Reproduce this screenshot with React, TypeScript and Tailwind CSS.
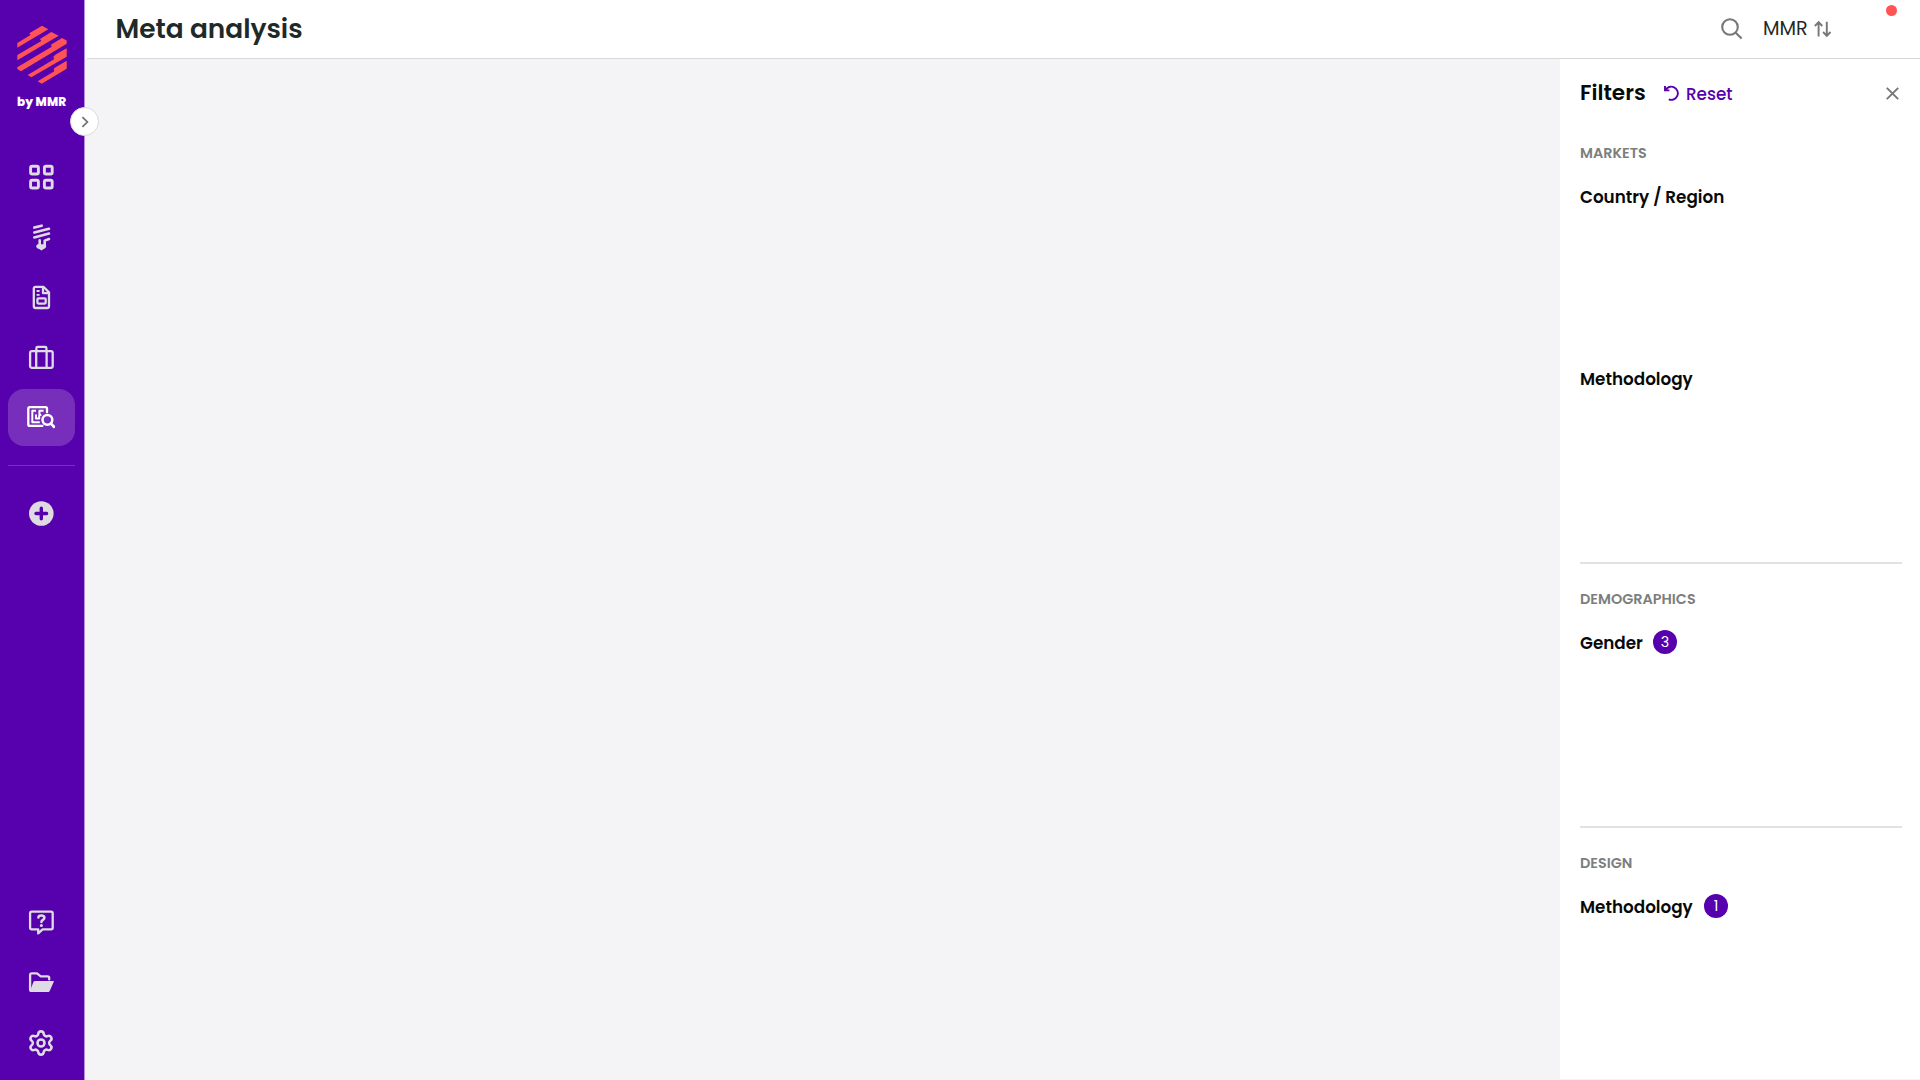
import React from 'react';
import { Settings } from 'lucide-react';

interface NavItem {
  name: string;
  icon: React.ReactNode;
  isActive?: boolean;
}

const Icon: React.FC<{ children: React.ReactNode }> = ({ children }) => (
  <svg
    width="28"
    height="28"
    viewBox="0 0 28 28"
    fill="none"
    stroke="currentColor"
    strokeWidth="2.3"
    strokeLinecap="round"
    strokeLinejoin="round"
  >
    {children}
  </svg>
);

const Logo = () => (
  <svg width="50" height="60" viewBox="17 25 50 60" fill="#ff5456">
    <path d="M17.3 43 30.5 35 29.3 33.3 42 25.7 48.3 29.3 17.3 47.7Z" />
    <path d="M17.3 55 41.3 41 40 39 51.3 32 58.7 35.7 17.3 60.3Z" />
    <path d="M17.3 67.3 51.7 46.7 51 44.8 62 38 66.7 40.5V43.7L21 71.2 17.3 69Z" />
    <path d="M27.7 75 54 59.3 53.5 56.5 56 54.3 66.7 48.3V56.7L31.3 77.3Z" />
    <path d="M37.7 81.3 54.3 71.3 53.7 68.7 56 66.9 66.7 60.8V68.7L41.7 83.7Z" />
  </svg>
);

const mainItems: NavItem[] = [
  {
    name: 'dashboard',
    icon: (
      <Icon>
        <g strokeWidth="2.9">
          <rect x="3.6" y="3.2" width="7.8" height="7.8" rx="1.6" />
          <rect x="17.4" y="3.2" width="7.8" height="7.8" rx="1.6" />
          <rect x="3.6" y="17.2" width="7.8" height="7.8" rx="1.6" />
          <rect x="17.4" y="17.2" width="7.8" height="7.8" rx="1.6" />
        </g>
      </Icon>
    ),
  },
  {
    name: 'ideas',
    icon: (
      <Icon>
        <path
          strokeWidth="2.6"
          d="M7.3 4.6 14.7 2.7M7.3 9.4 22 5.7M7.3 14.4 22 10.6M17.7 22V17.6L22 16M12.7 17.2V22"
        />
        <path
          fill="currentColor"
          stroke="none"
          d="M10.4 21.2H18L19.1 22.6C19.4 24.1 18.5 25.8 16.7 26L14.5 27.6 12.1 26C9.9 25.8 8.9 24.2 9.3 22.6Z"
        />
      </Icon>
    ),
  },
  {
    name: 'reports',
    icon: (
      <Icon>
        <path d="M8.6 3.8H16.4L22 9.4V23.2A1.8 1.8 0 0 1 20.2 25H8.6A1.8 1.8 0 0 1 6.8 23.2V5.6A1.8 1.8 0 0 1 8.6 3.8Z" />
        <path d="M16 4.8V10.2H21.4" />
        <rect x="10.4" y="15.4" width="8.3" height="5.2" rx="1" />
        <path strokeWidth="1.8" strokeLinecap="butt" d="M9.6 8H12.6M9.6 11.8H12.6" />
      </Icon>
    ),
  },
  {
    name: 'projects',
    icon: (
      <Icon>
        <rect x="3.1" y="8.2" width="22.6" height="16.6" rx="1.8" />
        <path d="M9.2 8.2V24.8M19.6 8.2V24.8M9.4 7.6V5A1.2 1.2 0 0 1 10.6 3.8H18.2A1.2 1.2 0 0 1 19.4 5V7.6" />
      </Icon>
    ),
  },
  {
    name: 'meta',
    isActive: true,
    icon: (
      <Icon>
        <path d="M20 9.2V5.6A1.4 1.4 0 0 0 18.6 4.2H2.7A1.4 1.4 0 0 0 1.3 5.6V21.4A1.4 1.4 0 0 0 2.7 22.8H15.4" />
        <path
          strokeWidth="2"
          strokeLinecap="butt"
          d="M9 7.8H5.3V19.2H12.8M16.6 7.8H12.4V11.8M9 11.6V15.6H12.2V12.8L14.2 11.4"
        />
        <circle cx="20.4" cy="16.8" r="4.9" strokeWidth="2.5" />
        <path strokeWidth="2.8" d="M24 20.6 27 23.8" />
      </Icon>
    ),
  },
];

const bottomItems: NavItem[] = [
  {
    name: 'help',
    icon: (
      <Icon>
        <path d="M4.7 3.6H24.1A1.6 1.6 0 0 1 25.7 5.2V19.8A1.6 1.6 0 0 1 24.1 21.4H15.6L11.2 25.4V21.4H4.7A1.6 1.6 0 0 1 3.1 19.8V5.2A1.6 1.6 0 0 1 4.7 3.6Z" />
        <path strokeWidth="2.5" d="M11.4 9.4C11.4 6.8 17.4 6.6 17.4 9.8 17.4 12 14.4 11.8 14.4 14" />
        <circle cx="14.4" cy="17.6" r="1.5" fill="currentColor" stroke="none" />
      </Icon>
    ),
  },
  {
    name: 'files',
    icon: (
      <Icon>
        <path d="M3.6 22.8C3.3 22.6 3.1 22.2 3.1 21.8V7A1.6 1.6 0 0 1 4.7 5.4H10L13.8 8.4H20.6A1.6 1.6 0 0 1 22.2 10V11.4" />
        <path
          fill="currentColor"
          stroke="none"
          d="M8 13H26C26.7 13 27 13.5 26.7 14.1L22.8 22.8C22.4 23.6 21.9 24 21 24H3.6C2.9 24 2.8 23.4 3.1 22.8L6.4 14C6.7 13.3 7.2 13 8 13Z"
        />
      </Icon>
    ),
  },
  { name: 'settings', icon: <Settings size={28} strokeWidth={2.2} className="mt-px" /> },
];

const NavButton: React.FC<{ item: NavItem }> = ({ item }) => (
  <button
    className={`flex h-[57px] w-[67px] items-center justify-center rounded-2xl pb-px pr-px ${
      item.isActive ? 'bg-[#772fbb] text-white' : 'text-[#dedbe2]'
    }`}
  >
    {item.icon}
  </button>
);

const Sidebar = () => (
  <aside className="relative flex w-[85px] shrink-0 flex-col border-r border-[#b68fdc] bg-[#5700ad] pl-2">
    <div className="ml-[9px] mt-[25px] h-[60px]">
      <Logo />
    </div>
    <span className="ml-[9px] mt-2 whitespace-nowrap text-[12px] font-extrabold leading-[18px] tracking-[0.1px] text-white">
      by MMR
    </span>
    <nav className="mt-[38px] flex flex-col gap-[3px]">
      {mainItems.map((item) => (
        <NavButton key={item.name} item={item} />
      ))}
    </nav>
    <div className="mt-[19px] h-px w-[67px] bg-[#772fbb]" />
    <button className="mt-[19px] flex h-[57px] w-[67px] items-center justify-center pb-px pr-px text-[#dedbe2]">
      <Icon>
        <circle cx="14.3" cy="14.5" r="12.3" fill="currentColor" stroke="none" />
        <path stroke="#5700ad" strokeWidth="3.4" d="M14.3 9.2V19.8M9 14.5H19.6" />
      </Icon>
    </button>
    <div className="mb-[9px] mt-auto flex flex-col gap-[3px]">
      {bottomItems.map((item) => (
        <NavButton key={item.name} item={item} />
      ))}
    </div>
    <button className="absolute left-[70px] top-[107px] flex size-[29px] items-center justify-center rounded-full border border-[#d9d9dc] bg-white">
      <svg width="12" height="12" viewBox="0 0 12 12" fill="none" stroke="#6c706f" strokeWidth="1.7">
        <path d="M3.4 1.2 8.4 6 3.4 10.8" />
      </svg>
    </button>
  </aside>
);

const Header = () => (
  <header className="h-[59px] bg-white pl-0.5">
    <div className="flex h-full items-center border-b border-[#d6d7d9] pl-[28.5px]">
      <h1 className="text-[26.4px] font-semibold leading-9 text-[#1f2a28]">Meta analysis</h1>
      <div className="relative ml-auto flex h-full w-[199px] items-center">
        <svg className="mb-px" width="22" height="22" viewBox="0 0 22 22" fill="none" stroke="#747877" strokeWidth="2.1">
          <circle cx="9" cy="9" r="7.8" />
          <path d="M14.7 14.7 20.6 20.6" />
        </svg>
        <span className="ml-[20px] w-[51px] text-[19.2px] leading-7 text-[#1f2a28]">MMR</span>
        <svg className="mb-px" width="18" height="18" viewBox="0 0 18 18" fill="none" stroke="#747877" strokeWidth="1.9">
          <path d="M4.6 16.4V2.4M.9 6 4.6 2.2 8.3 6M12.8 1.8V15.6M9.1 12 12.8 15.8 16.5 12" />
        </svg>
        <span className="absolute right-[23px] top-[5px] size-[11px] rounded-full bg-[#ff5456]" />
      </div>
    </div>
  </header>
);

interface FilterProps {
  label: string;
  labelClass?: string;
  count?: number;
}

const Filter: React.FC<FilterProps> = ({ label, labelClass = '', count }) => (
  <div className="h-[182px]">
    <div className="flex h-6 items-center">
      <span className={`pt-px text-[16.8px] font-semibold text-[#070a09] ${labelClass}`}>{label}</span>
      {count !== undefined && (
        <span className="mb-0.5 flex size-6 items-center justify-center rounded-full bg-[#5700ad] pt-0.5 text-[14.4px] text-white">
          {count}
        </span>
      )}
    </div>
  </div>
);

const SectionTitle: React.FC<{ children: React.ReactNode }> = ({ children }) => (
  <h3 className="mb-[21px] text-[14.4px] font-semibold leading-[22px] text-[#7b7e7d]">{children}</h3>
);

const FiltersPanel = () => (
  <aside className="w-[360px] shrink-0 bg-white pl-5 pr-[18px]">
    <div className="flex h-[68px] items-center">
      <h2 className="w-[84px] pt-px text-[21.6px] font-semibold text-[#070a09]">Filters</h2>
      <button className="flex items-center text-[#5700ad]">
        <svg width="16" height="16" viewBox="0 0 16 16" fill="none" stroke="currentColor" strokeWidth="1.9">
          <path d="M1 1V5.4H5.4M1.4 5.2A6.6 6.6 0 1 1 4.8 14.4" />
        </svg>
        <span className="ml-1.5 pt-[3px] text-[16.8px] font-medium">Reset</span>
      </button>
      <svg className="ml-auto mr-[3px]" width="13" height="13" viewBox="0 0 13 13" stroke="#747877" strokeWidth="1.9">
        <path d="M.8.8 12.2 12.2M12.2.8.8 12.2" />
      </svg>
    </div>

    <section className="h-[437px] border-b-2 border-[#e2e2e2] pt-[15px]">
      <SectionTitle>MARKETS</SectionTitle>
      <Filter label="Country / Region" />
      <Filter label="Methodology" />
    </section>
    <section className="h-[264px] border-b-2 border-[#e2e2e2] pt-6">
      <SectionTitle>DEMOGRAPHICS</SectionTitle>
      <Filter label="Gender" labelClass="w-[73px]" count={3} />
    </section>
    <section className="pt-6">
      <SectionTitle>DESIGN</SectionTitle>
      <Filter label="Methodology" labelClass="w-[124px]" count={1} />
    </section>
  </aside>
);

const App = () => {
  return (
    <div className="flex h-screen overflow-hidden bg-[#f4f4f7] font-['Poppins','Inter',sans-serif]">
      <Sidebar />
      <div className="flex min-w-0 flex-1 flex-col">
        <Header />
        <div className="flex min-h-0 flex-1 pb-px">
          <main className="flex-1" />
          <FiltersPanel />
        </div>
      </div>
    </div>
  );
};

export default App;
